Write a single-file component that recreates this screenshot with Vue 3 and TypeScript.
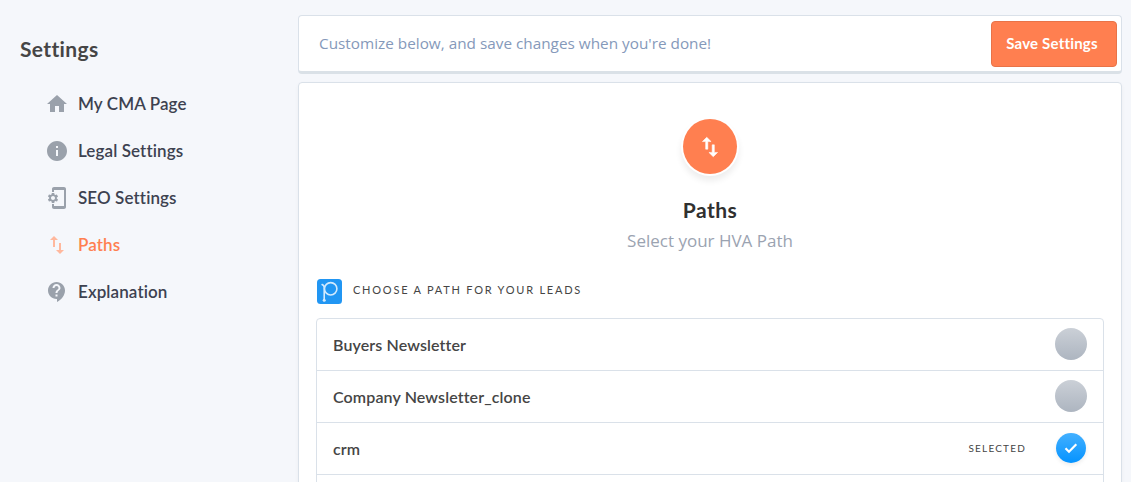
<script setup lang="ts">
import { ref } from 'vue'

interface NavItem {
	label: string;
	icon: string;
}

const active = ref('Paths')
const selected = ref('crm')

const swapIcon = 'M16 17.01V10h-2v7.01h-3L15 21l4-3.99h-3zM9 3L5 6.99h3V14h2V6.99h3L9 3z'

const navItems: NavItem[] = [
	{ label: 'My CMA Page', icon: 'M10 20v-6h4v6h5v-8h3L12 3 2 12h3v8z' },
	{ label: 'Legal Settings', icon: 'M12 2C6.48 2 2 6.48 2 12s4.48 10 10 10 10-4.48 10-10S17.52 2 12 2zm1 15h-2v-6h2v6zm0-8h-2V7h2v2z' },
	{ label: 'SEO Settings', icon: 'M11.8 12.5v-1l1.1-.8c.1-.1.1-.2.1-.3l-1-1.7c-.1-.1-.2-.2-.3-.1l-1.3.4c-.3-.2-.6-.4-.9-.5l-.2-1.3c0-.1-.1-.2-.3-.2H7c-.1 0-.2.1-.3.2l-.2 1.3c-.3.1-.6.3-.9.5l-1.3-.5c-.1 0-.2 0-.3.1l-1 1.7c-.1.1 0 .2.1.3l1.1.9v1l-1.1.8c-.1.2-.1.3-.1.4l1 1.7c.1.1.2.2.3.1l1.4-.4c.3.2.6.4.9.5l.2 1.3c-.1.1.1.2.2.2h2c.1 0 .2-.1.3-.2l.2-1.3c.3-.1.6-.3.9-.5l1.3.5c.1 0 .2 0 .3-.1l1-1.7c.1-.1 0-.2-.1-.3l-1.1-.9zM8 14c-1.1 0-2-.9-2-2s.9-2 2-2 2 .9 2 2-.9 2-2 2zM19 1H9c-1.1 0-2 .9-2 2v3h2V4h10v16H9v-2H7v3c0 1.1.9 2 2 2h10c1.1 0 2-.9 2-2V3c0-1.1-.9-2-2-2z' },
	{ label: 'Paths', icon: swapIcon },
	{ label: 'Explanation', icon: 'M11.5 2C6.81 2 3 5.81 3 10.5S6.81 19 11.5 19h.5v3c4.86-2.34 8-7 8-11.5C20 5.81 16.19 2 11.5 2zm1 14.5h-2v-2h2v2zm0-3.5h-2c0-3.25 3-3 3-5 0-1.1-.9-2-2-2s-2 .9-2 2h-2c0-2.21 1.79-4 4-4s4 1.79 4 4c0 2.5-3 2.75-3 5z' },
]

const paths: string[] = ['Buyers Newsletter', 'Company Newsletter_clone', 'crm']
</script>

<template>
	<div class="page">
		<aside class="sidebar">
			<h1>Settings</h1>
			<nav>
				<a v-for="item in navItems" :key="item.label" :class="{ active: item.label === active }" @click="active = item.label">
					<svg viewBox="0 0 24 24"><path :d="item.icon" /></svg>
					<span>{{ item.label }}</span>
				</a>
			</nav>
		</aside>

		<main>
			<div class="savebar">
				<span>Customize below, and save changes when you're done!</span>
				<button>Save Settings</button>
			</div>

			<section class="card">
				<div class="badge">
					<svg viewBox="0 0 24 24"><path :d="swapIcon" /></svg>
				</div>
				<h2>Paths</h2>
				<p class="sub">Select your HVA Path</p>

				<div class="choose">
					<svg class="logo" viewBox="0 0 25 25">
						<rect width="25" height="25" rx="3.5" />
						<circle cx="13.7" cy="9.8" r="6.2" />
						<path d="M4.8 5.5Q7.2 6 7.2 8.5V21" />
						<circle class="dot" cx="7.2" cy="21.2" r="1.5" />
						<circle class="dot" cx="5.2" cy="5.6" r="0.8" />
					</svg>
					<span>CHOOSE A PATH FOR YOUR LEADS</span>
				</div>

				<ul>
					<li v-for="p in paths" :key="p" @click="selected = p">
						<span class="name">{{ p }}</span>
						<span v-if="p === selected" class="tag">SELECTED</span>
						<span class="dot-btn" :class="{ on: p === selected }">
							<svg v-if="p === selected" viewBox="0 0 14 12"><path d="M1.5 6.2L5 9.7L12.3 2.2" /></svg>
						</span>
					</li>
				</ul>
			</section>
		</main>
	</div>
</template>

<style>
body {
	background: #f5f7fb;
	overflow: hidden;
}
</style>

<style scoped>
.page {
	display: flex;
	height: 482px;
	overflow: hidden;
	box-sizing: border-box;
	padding: 15px 9px 0 20px;
	background: #f5f7fb;
	font-family: Lato, "Liberation Sans", sans-serif;
	font-variant-ligatures: none;
	color: #454545;
}

.sidebar {
	width: 278px;
	flex: none;
}

h1 {
	margin: 20px 0 0;
	font-size: 21px;
	line-height: 28px;
	font-weight: 700;
	letter-spacing: 0.35px;
}

nav {
	margin-top: 17px;
}

nav a {
	display: flex;
	align-items: center;
	height: 47px;
	padding-left: 24.5px;
	gap: 9.5px;
	font-size: 17px;
	font-weight: 600;
	letter-spacing: 0.1px;
	color: #3d4250;
	cursor: pointer;
}

nav svg {
	width: 24px;
	height: 24px;
	fill: #9aa1ab;
}

nav .active {
	color: #ff7f50;
}

nav .active svg {
	fill: #ffb89d;
}

main {
	flex: 1;
	display: flex;
	flex-direction: column;
	gap: 8px;
}

.savebar {
	display: flex;
	align-items: center;
	justify-content: space-between;
	box-sizing: border-box;
	height: 59px;
	flex: none;
	padding: 0 4px 0 20px;
	background: #fff;
	border: 1px solid #dae1e9;
	border-bottom: 3px solid #dae1e7;
	border-radius: 4px;
	font-family: "Open Sans", sans-serif;
	font-size: 15.3px;
	letter-spacing: 0.01px;
	color: #8599ba;
}

.savebar span {
	padding-bottom: 2px;
}

button {
	width: 126px;
	height: 46px;
	padding: 0 4px 2px 0;
	border: 1px solid #e87348;
	border-radius: 4px;
	background: #ff7f50;
	color: #fff;
	font-family: Lato, sans-serif;
	font-variant-ligatures: none;
	font-size: 15px;
	font-weight: 700;
	letter-spacing: 0.2px;
}

.card {
	display: flex;
	flex-direction: column;
	align-items: center;
	flex: none;
	box-sizing: border-box;
	height: 460px;
	padding: 36px 17px 0;
	background: #fff;
	border: 1px solid #dae1e9;
	border-radius: 4px;
	box-shadow: 0 2px 4px rgba(0, 0, 0, 0.04);
}

.badge {
	display: flex;
	align-items: center;
	justify-content: center;
	width: 54px;
	height: 55px;
	border-radius: 50%;
	background: #ff7f50;
	box-shadow: 0 0 0 2px #fff, 0 5px 6px 2px rgba(0, 0, 0, 0.07);
}

.badge svg {
	width: 26px;
	height: 26px;
	fill: #fff;
	stroke: #fff;
	stroke-width: 0.5;
}

h2 {
	margin: 22px 0 0;
	font-size: 21px;
	line-height: 28px;
	font-weight: 700;
	letter-spacing: 0.45px;
	color: #303030;
}

.sub {
	margin: 5px 0 0;
	font-family: "Open Sans", sans-serif;
	font-size: 17px;
	line-height: 24px;
	color: #9ba3b1;
}

.choose {
	display: flex;
	align-items: center;
	align-self: stretch;
	gap: 11px;
	margin-top: 26px;
	height: 25px;
	padding-left: 1px;
	font-size: 11px;
	letter-spacing: 1.77px;
}

.choose span {
	padding-bottom: 4px;
}

.logo {
	width: 25px;
	height: 25px;
	fill: none;
	stroke: #d3eafd;
	stroke-width: 1.6;
}

.logo rect {
	fill: #2196f3;
	stroke: none;
}

.logo .dot {
	fill: #d3eafd;
	stroke: none;
}

ul {
	align-self: stretch;
	flex: 1;
	margin: 14px 0 0;
	padding: 0;
	list-style: none;
	border: 1px solid #dae1e9;
	border-radius: 4px;
}

li {
	display: flex;
	align-items: center;
	box-sizing: border-box;
	height: 52px;
	padding: 0 16px 1px;
	border-bottom: 1px solid #dae1e9;
}

.name {
	flex: 1;
	padding-top: 1px;
	font-size: 16px;
	font-weight: 600;
	letter-spacing: 0.12px;
}

.tag {
	margin-right: 30px;
	font-size: 10px;
	letter-spacing: 1.2px;
}

.dot-btn {
	display: flex;
	align-items: center;
	justify-content: center;
	width: 32px;
	height: 32px;
	border-radius: 50%;
	background: linear-gradient(#cbd0d7, #adb5c0);
}

.dot-btn.on {
	width: 30px;
	height: 30px;
	margin-right: 1px;
	background: linear-gradient(#43b0ff, #0593ff);
	box-shadow: 0 2px 4px rgba(0, 0, 0, 0.08);
}

.dot-btn svg {
	width: 14px;
	height: 12px;
	fill: none;
	stroke: #fff;
	stroke-width: 2.2;
}
</style>
